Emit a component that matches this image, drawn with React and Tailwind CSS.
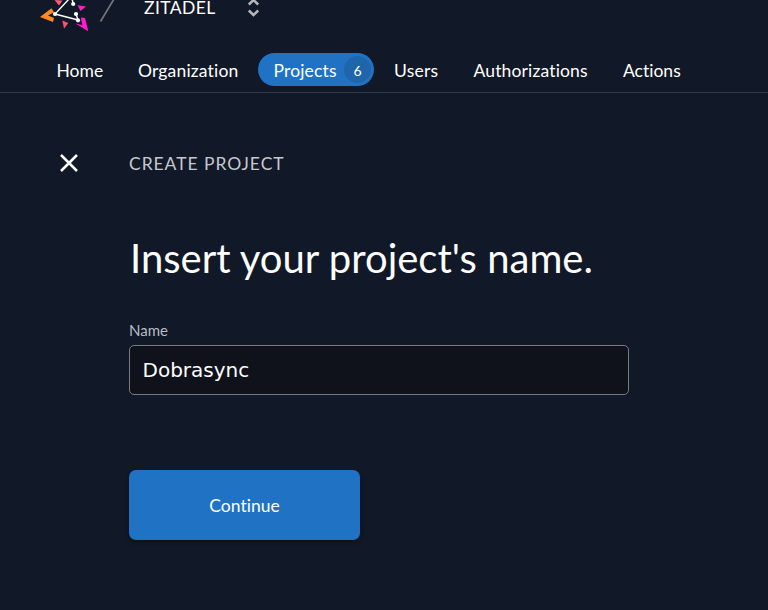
import React from "react";

function Logo() {
  return (
    <svg className="block h-8 w-[52px] shrink-0" viewBox="0 0 52 32" fill="none">
      <path d="M14.5 0L22.5 0.5L19 5.5Z" fill="#ff5a78" />
      <path d="M0 17L11.5 8.3L14 12.3L8 15.5L14 18L13 22Z" fill="#ff8a22" />
      <path d="M22.3 20.5L28.3 23L24 28.8Z" fill="#ff4d74" />
      <path d="M37.5 5.3L46 6.5L40.5 11Z" fill="#ff1fc6" />
      <path d="M35.3 23.5L42.3 25L40.8 17.5L45 18L48.3 31.2Z" fill="#ff1bcf" />
      <path d="M29 -1L15 14L38 20L36 14M33.5 4L31 -4" stroke="#fff" strokeWidth="1.4" />
      <circle cx="15" cy="14" r="2.1" fill="#fff" />
      <circle cx="38" cy="20.3" r="2.1" fill="#fff" />
      <circle cx="36" cy="14" r="2.1" fill="#fff" />
      <circle cx="33.2" cy="4" r="2.1" fill="#fff" />
    </svg>
  );
}

function Header() {
  return (
    <header className="h-[93px] border-b border-[#303642]">
      <div className="flex h-[53px] items-start pl-10">
        <Logo />
        <svg className="ml-1 block h-8 w-6 shrink-0" viewBox="0 0 24 32" fill="none">
          <path d="M18 -1L4.5 21.5" stroke="#73767e" strokeWidth="1.7" />
        </svg>
        <span className="ml-6 w-[76px] text-[17.5px] leading-[15px] tracking-[0.4px]">ZITADEL</span>
        <svg className="ml-[25px] block h-5 w-5 shrink-0" viewBox="0 0 20 20" fill="none">
          <path d="M3.8 4.5L8.5 0L13.2 4.5M3.8 10.5L8.5 15L13.2 10.5" stroke="#b5b7bc" strokeWidth="2.5" />
        </svg>
      </div>
      <nav className="flex h-[33px] items-center gap-1 pl-[41px] text-[17.5px] leading-[33px]">
        <a className="w-[77px] pl-[15.5px] pt-0.5">Home</a>
        <a className="w-[132px] pl-4 pt-0.5 tracking-[0.17px]">Organization</a>
        <a className="flex h-[33px] w-[116px] items-center justify-between rounded-full bg-[#2073c4] pl-[15.5px] pr-[3px]">
          <span className="pt-0.5 leading-[33px] tracking-[0.15px]">Projects</span>
          <span className="flex h-[27px] w-[27px] items-center justify-center rounded-full bg-[#1f65a9] pt-[3px] text-[14px] leading-[20px]">6</span>
        </a>
        <a className="w-[75px] pl-4 pt-0.5 tracking-[0.25px]">Users</a>
        <a className="w-[145px] pl-[16.5px] pt-0.5 tracking-[0.15px]">Authorizations</a>
        <a className="pl-[17px] pt-0.5">Actions</a>
      </nav>
    </header>
  );
}

export default function App() {
  return (
    <div className="h-[610px] w-[768px] overflow-hidden bg-[#111827] font-[Lato,sans-serif] text-white antialiased [font-variant-ligatures:none]">
      <Header />
      <main className="flex pt-[55px]">
        <div className="flex w-[129px] shrink-0 pl-[59px] pt-[5px]">
          <svg className="h-5 w-5" viewBox="0 0 20 20" fill="none">
            <path d="M2 2L18 18M18 2L2 18" stroke="#fff" strokeWidth="2.5" />
          </svg>
        </div>
        <div className="w-[500px]">
          <div className="h-[30px] text-[17.5px] leading-[32px] tracking-[0.95px] text-[#c6c8cc]">CREATE PROJECT</div>
          <h1 className="mt-[55px] h-[50px] whitespace-nowrap pl-px text-[40px] leading-[50px]">Insert your project's name.</h1>
          <label className="mt-[37px] block h-5 text-[15px] leading-[20px] text-[#b9bcc2]">Name</label>
          <input
            className="mt-[5px] block h-[50px] w-full rounded-[5px] border border-[#777a80] bg-[#0f121b] px-[12.5px] font-['DejaVu_Sans',sans-serif] text-[20px] outline-none"
            defaultValue="Dobrasync"
          />
          <button className="mt-[75px] block h-[70px] w-[231px] rounded-[7px] bg-[#2073c4] pt-0.5 text-[17.5px] shadow-[0_2px_4px_rgba(0,0,0,0.4)]">
            Continue
          </button>
        </div>
      </main>
    </div>
  );
}
